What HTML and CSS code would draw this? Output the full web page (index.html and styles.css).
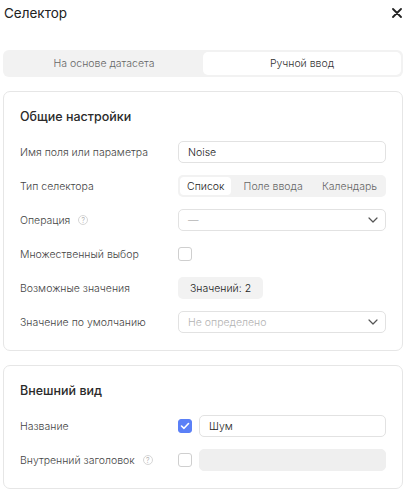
FILE: index.html
```html
<!DOCTYPE html>
<html lang="ru">
<head>
<meta charset="utf-8">
<link rel="stylesheet" href="styles.css">
</head>
<body>
<div class="dialog">
  <div class="header">
    <span class="title">Селектор</span>
    <svg class="close" width="10" height="10" viewBox="0 0 10 10"><path d="M1 1L9 9M9 1L1 9" stroke="#222" stroke-width="1.8" stroke-linecap="round"/></svg>
  </div>
  <div class="tabs">
    <div class="tab">На основе датасета</div>
    <div class="tab active">Ручной ввод</div>
  </div>

  <div class="card">
    <div class="card-title">Общие настройки</div>
    <div class="rows">
      <div class="row">
        <div class="label">Имя поля или параметра</div>
        <div class="control"><div class="input">Noise</div></div>
      </div>
      <div class="row">
        <div class="label">Тип селектора</div>
        <div class="control">
          <div class="segmented">
            <div class="seg active">Список</div>
            <div class="seg">Поле ввода</div>
            <div class="seg">Календарь</div>
          </div>
        </div>
      </div>
      <div class="row">
        <div class="label">Операция <span class="help">?</span></div>
        <div class="control">
          <div class="input select"><span class="placeholder">—</span>
            <svg class="chev" width="10" height="6" viewBox="0 0 10 6"><path d="M1 1L5 5L9 1" fill="none" stroke="#555" stroke-width="1.2" stroke-linecap="round" stroke-linejoin="round"/></svg>
          </div>
        </div>
      </div>
      <div class="row">
        <div class="label">Множественный выбор</div>
        <div class="control"><span class="checkbox"></span></div>
      </div>
      <div class="row">
        <div class="label">Возможные значения</div>
        <div class="control"><div class="button">Значений: 2</div></div>
      </div>
      <div class="row">
        <div class="label">Значение по умолчанию</div>
        <div class="control">
          <div class="input select"><span class="placeholder">Не определено</span>
            <svg class="chev" width="10" height="6" viewBox="0 0 10 6"><path d="M1 1L5 5L9 1" fill="none" stroke="#555" stroke-width="1.2" stroke-linecap="round" stroke-linejoin="round"/></svg>
          </div>
        </div>
      </div>
    </div>
  </div>

  <div class="card">
    <div class="card-title">Внешний вид</div>
    <div class="rows">
      <div class="row">
        <div class="label">Название</div>
        <div class="control with-check">
          <span class="checkbox checked"><svg width="10" height="8" viewBox="0 0 10 8"><path d="M1.5 4L4 6.3L8.5 1.5" fill="none" stroke="#fff" stroke-width="1.6" stroke-linecap="round" stroke-linejoin="round"/></svg></span>
          <div class="input">Шум</div>
        </div>
      </div>
      <div class="row">
        <div class="label">Внутренний заголовок <span class="help">?</span></div>
        <div class="control with-check">
          <span class="checkbox"></span>
          <div class="input disabled"></div>
        </div>
      </div>
    </div>
  </div>
</div>
</body>
</html>
```

FILE: styles.css
```css
* { box-sizing: border-box; }
html, body { margin: 0; background: #fff; }
body {
  font-family: Inter, "Noto Sans", sans-serif;
  color: #333;
  font-size: 11px;
  font-weight: 300;
}
.dialog {
  padding: 0 3px;
  display: flex;
  flex-direction: column;
}
.header {
  height: 25px;
  display: flex;
  align-items: center;
  justify-content: space-between;
  padding: 0 1px 0 1px;
}
.title {
  font-size: 13.5px;
  font-weight: 400;
  color: #222;
}
.close { display: block; }
.tabs {
  margin-top: 25px;
  height: 27px;
  background: #f2f2f2;
  border-radius: 6px;
  padding: 2px;
  display: flex;
}
.tab {
  flex: 1;
  display: flex;
  align-items: center;
  justify-content: center;
  color: #666;
  font-size: 10.5px;
  border-radius: 5px;
}
.tab.active {
  background: #fff;
  color: #333;
}
.card {
  margin-top: 14px;
  border: 1px solid #e6e6e6;
  border-radius: 7px;
  padding: 16px 16px 17px 16px;
}
.card-title {
  font-size: 12.5px;
  font-weight: 500;
  color: #2a2a2a;
  line-height: 18px;
  margin-bottom: 15px;
}
.rows {
  display: flex;
  flex-direction: column;
  gap: 12px;
}
.row {
  display: flex;
  align-items: center;
  min-height: 22px;
}
.label {
  width: 158px;
  flex: none;
  color: #444;
  font-size: 10.5px;
  display: flex;
  align-items: center;
}
.help {
  display: inline-flex;
  width: 10px;
  height: 10px;
  border: 1px solid #d6d6d6;
  border-radius: 50%;
  align-items: center;
  justify-content: center;
  font-size: 7px;
  color: #999;
  margin-left: 8px;
}
.control {
  flex: 1;
  display: flex;
  align-items: center;
}
.with-check { gap: 7px; }
.input {
  flex: 1;
  height: 22px;
  border: 1px solid #e2e2e2;
  border-radius: 5px;
  padding: 0 9px;
  display: flex;
  align-items: center;
  color: #222;
  font-size: 10.5px;
}
.input.disabled {
  background: #efefef;
  border-color: #efefef;
}
.select { justify-content: space-between; padding-right: 7px; }
.placeholder { color: #b3b3b3; }
.segmented {
  flex: 1;
  height: 22px;
  background: #f2f2f2;
  border-radius: 5px;
  padding: 2px;
  display: flex;
  justify-content: space-between;
}
.seg {
  padding: 0 7px;
  display: flex;
  align-items: center;
  color: #666;
  font-size: 10.5px;
  border-radius: 4px;
}
.seg.active {
  background: #fff;
  color: #222;
}
.checkbox {
  width: 14px;
  height: 14px;
  border: 1px solid #cfcfcf;
  border-radius: 3px;
  display: inline-flex;
  align-items: center;
  justify-content: center;
  flex: none;
}
.checkbox.checked {
  background: #5b80f7;
  border-color: #5b80f7;
}
.button {
  height: 22px;
  background: #f2f2f2;
  border-radius: 5px;
  padding: 0 12px;
  display: flex;
  align-items: center;
  color: #222;
  font-size: 10.5px;
}
```
